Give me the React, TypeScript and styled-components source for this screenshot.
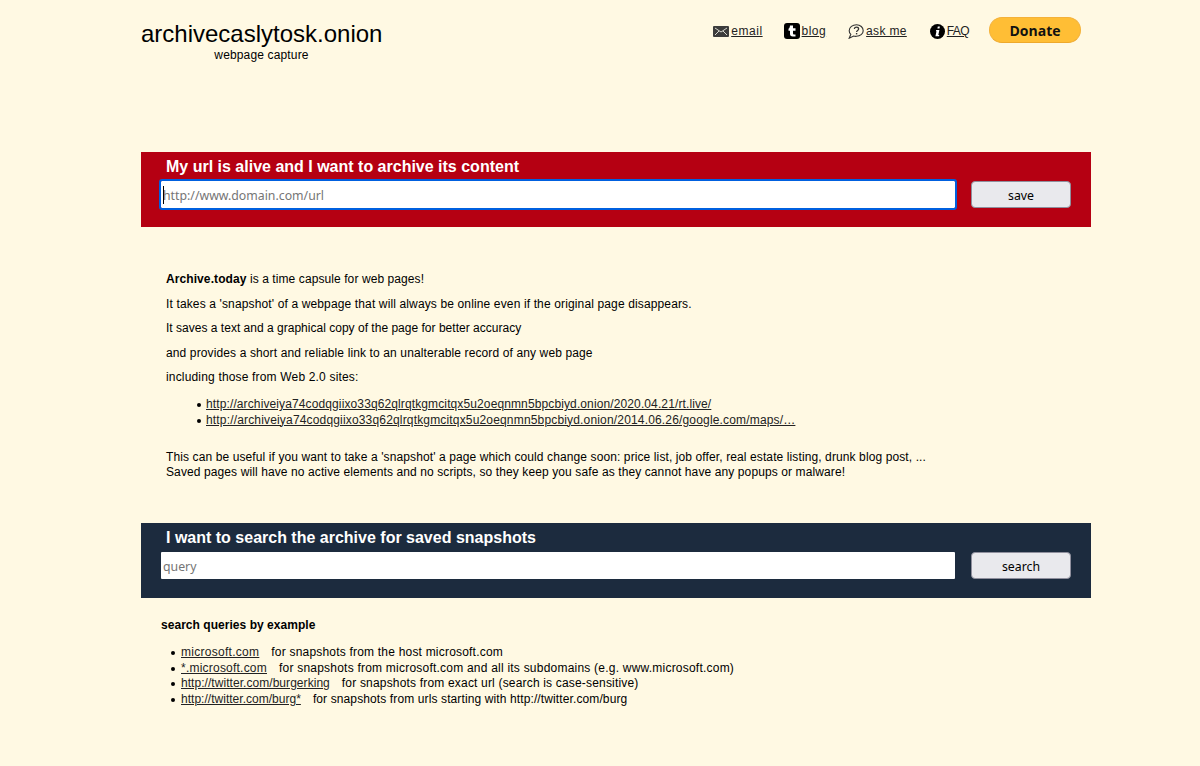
import React from "react";
import styled, { createGlobalStyle } from "styled-components";

const Global = createGlobalStyle`
  html, body { margin: 0; padding: 0; background: #fff9e3; }
  body { font-family: "Liberation Sans", Arial, sans-serif; font-size: 12px; color: #000; }
  a { color: #222; text-decoration: underline; }
`;

const Page = styled.div`
  width: 950px;
  height: 766px;
  margin-left: 141px;
  overflow: hidden;
`;

const Header = styled.header`
  height: 152px;
  display: flex;
  justify-content: space-between;
  align-items: flex-start;
`;

const Brand = styled.div`
  padding-top: 20px;
  width: 241px;
  text-align: center;
`;

const Title = styled.div`
  font-size: 24px;
  line-height: 27px;
  white-space: nowrap;
`;

const Tagline = styled.div`
  font-size: 12px;
  line-height: 14px;
  letter-spacing: 0.15px;
  padding-top: 1px;
`;

const Nav = styled.nav`
  display: flex;
  align-items: center;
  margin-top: 17px;
  margin-right: 10px;
  height: 28px;
`;

const NavItem = styled.a<{ $gap: number; $ls: number; $iconGap: number }>`
  display: flex;
  align-items: center;
  gap: ${(p) => p.$iconGap}px;
  margin-right: ${(p) => p.$gap}px;
  color: #222;
  font-size: 12px;
  line-height: 14px;
  letter-spacing: ${(p) => p.$ls}px;
`;

const NavIcon = styled.svg`
  display: block;
  flex: none;
`;

const Donate = styled.div`
  align-self: flex-start;
  box-sizing: border-box;
  width: 92px;
  height: 26px;
  border-radius: 13px;
  background: #ffbe35;
  border: 1px solid #f4b23a;
  border-bottom-color: #eea92c;
  display: flex;
  align-items: center;
  justify-content: center;
  font-family: "Open Sans", "Noto Sans", sans-serif;
  font-weight: 700;
  font-size: 14px;
  color: #111;
`;

const Bar = styled.section<{ $bg: string }>`
  background: ${(p) => p.$bg};
  height: 75px;
  padding: 5px 20px 0;
  box-sizing: border-box;
`;

const BarTitle = styled.div`
  color: #fff;
  font-size: 16px;
  font-weight: 700;
  line-height: 19px;
  padding-left: 5px;
`;

const BarRow = styled.div`
  display: flex;
  align-items: center;
  margin-top: 5px;
  height: 27px;
`;

const InputWrap = styled.div`
  position: relative;
  width: 794px;
  height: 27px;
  margin-right: 16px;
  flex: none;
`;

const UrlInput = styled.input<{ $focus?: boolean }>`
  display: block;
  box-sizing: border-box;
  width: 100%;
  height: 27px;
  background: #fff;
  border: 0;
  border-radius: 1px;
  outline: ${(p) => (p.$focus ? "2px solid #0060df" : "0")};
  padding: 2px 0 0 2px;
  font-family: "Noto Sans", sans-serif;
  font-size: 12.3px;
  color: #000;
  &::placeholder { color: #757575; opacity: 1; }
`;

const Caret = styled.span`
  position: absolute;
  left: 2px;
  top: 5px;
  width: 1px;
  height: 18px;
  background: #000;
`;

const Button = styled.button`
  box-sizing: border-box;
  width: 100px;
  height: 27px;
  background: #e9e9ed;
  border: 1px solid #8f8f9d;
  border-radius: 4px;
  font-family: "Noto Sans", sans-serif;
  font-size: 12.3px;
  color: #000;
  padding: 2px 0 0;
`;

const Intro = styled.div`
  height: 296px;
  padding: 45px 0 0 25px;
  box-sizing: border-box;
`;

const Para = styled.div<{ $ls: number }>`
  line-height: 14px;
  margin-bottom: 10.5px;
  white-space: nowrap;
  letter-spacing: ${(p) => p.$ls}px;
`;

const LinkList = styled.ul`
  margin: 13px 0 22px;
  padding: 0 0 0 40px;
  list-style: none;
  line-height: 15.5px;
`;

const Item = styled.li<{ $ls: number; $bullet: number }>`
  position: relative;
  white-space: nowrap;
  letter-spacing: ${(p) => p.$ls}px;
  &::before {
    content: "";
    position: absolute;
    left: ${(p) => p.$bullet}px;
    top: 6px;
    width: 4px;
    height: 4px;
    border-radius: 50%;
    background: #000;
  }
`;

const Note = styled.div<{ $ls: number }>`
  line-height: 15px;
  white-space: nowrap;
  letter-spacing: ${(p) => p.$ls}px;
`;

const Examples = styled.div`
  padding: 20px 0 0 20px;
`;

const ExamplesHead = styled.div`
  font-weight: 700;
  line-height: 14px;
  letter-spacing: 0.04px;
`;

const ExampleList = styled.ul`
  margin: 13px 0 0;
  padding: 0 0 0 20px;
  list-style: none;
  line-height: 15.5px;
`;

const ExampleLink = styled.a<{ $ls: number }>`
  margin-right: 12px;
  letter-spacing: ${(p) => p.$ls}px;
`;

const examples = [
  { link: "microsoft.com", text: "for snapshots from the host microsoft.com", linkLs: 0.28, ls: 0.2 },
  { link: "*.microsoft.com", text: "for snapshots from microsoft.com and all its subdomains (e.g. www.microsoft.com)", linkLs: 0.22, ls: 0.22 },
  { link: "http://twitter.com/burgerking", text: "for snapshots from exact url (search is case-sensitive)", linkLs: 0.05, ls: 0.18 },
  { link: "http://twitter.com/burg*", text: "for snapshots from urls starting with http://twitter.com/burg", linkLs: 0.02, ls: 0.115 },
];

export default function App() {
  return (
    <>
      <Global />
      <Page>
        <Header>
          <Brand>
            <Title>archivecaslytosk.onion</Title>
            <Tagline>webpage capture</Tagline>
          </Brand>
          <Nav>
            <NavItem href="#" $gap={21} $ls={0.55} $iconGap={2}>
              <NavIcon width="16" height="11" viewBox="0 0 16 11">
                <rect width="16" height="11" rx="1" fill="#3c3c3c" />
                <path d="M2 2 8 6 14 2M2 9 6 5M14 9 10 5" stroke="#d8d8d0" strokeWidth="1" fill="none" />
              </NavIcon>
              email
            </NavItem>
            <NavItem href="#" $gap={22} $ls={0.45} $iconGap={2}>
              <NavIcon width="16" height="16" viewBox="0 0 16 16">
                <rect width="16" height="16" rx="3" fill="#000" />
                <path d="M6 2.500h3v2.800h2.500v2.400H9v2.500c0 .9.500 1.200 1.200 1.200h1.300v2.200H8.800C6.900 13.600 6 12.600 6 10.800V7.700H4.500V5.800C5.500 5.400 5.900 4 6 2.500z" fill="#fff" />
              </NavIcon>
              blog
            </NavItem>
            <NavItem href="#" $gap={23} $ls={0.33} $iconGap={2}>
              <NavIcon width="16" height="15" viewBox="0 0 16 15">
                <path d="M8.500 .7C4.600 .7 1.200 3.200 1.200 6.700c0 1.500.6 2.700 1.600 3.600L1.200 14.200l4.400-2.200c.9.300 1.900.4 2.900.3 3.500-.2 6.700-2.400 6.700-5.600S12.400 .7 8.500 .7z" fill="none" stroke="#333" strokeWidth="1.100" />
                <path d="M6.300 5c.2-1.200 1.100-1.800 2.200-1.800 1.200 0 2.100.8 2.100 1.800 0 1.500-2 1.500-2 3" fill="none" stroke="#333" strokeWidth="1.300" />
                <rect x="7.900" y="9" width="1.400" height="1.400" fill="#333" />
              </NavIcon>
              ask me
            </NavItem>
            <NavItem href="#" $gap={20} $ls={-0.6} $iconGap={2}>
              <NavIcon width="15" height="15" viewBox="0 0 15 15">
                <circle cx="7.500" cy="7.500" r="7.500" fill="#000" />
                <path d="M7.800 2.500h2.100l-.4 2h-2.100zM6.200 6h3.200l-1.100 5h1l-.3 1.300H5.400l1.100-5.100h-.6z" fill="#fff" />
              </NavIcon>
              FAQ
            </NavItem>
            <Donate>Donate</Donate>
          </Nav>
        </Header>

        <Bar $bg="#b50012">
          <BarTitle>My url is alive and I want to archive its content</BarTitle>
          <BarRow>
            <InputWrap>
              <UrlInput $focus placeholder="http://www.domain.com/url" />
              <Caret />
            </InputWrap>
            <Button>save</Button>
          </BarRow>
        </Bar>

        <Intro>
          <Para $ls={0.087}><b>Archive.today</b> is a time capsule for web pages!</Para>
          <Para $ls={0.136}>It takes a 'snapshot' of a webpage that will always be online even if the original page disappears.</Para>
          <Para $ls={0.014}>It saves a text and a graphical copy of the page for better accuracy</Para>
          <Para $ls={0.123}>and provides a short and reliable link to an unalterable record of any web page</Para>
          <Para $ls={0.17}>including those from Web 2.0 sites:</Para>
          <LinkList>
            <Item $ls={0.116} $bullet={-9}><a href="#">http://archiveiya74codqgiixo33q62qlrqtkgmcitqx5u2oeqnmn5bpcbiyd.onion/2020.04.21/rt.live/</a></Item>
            <Item $ls={0.167} $bullet={-9}><a href="#">http://archiveiya74codqgiixo33q62qlrqtkgmcitqx5u2oeqnmn5bpcbiyd.onion/2014.06.26/google.com/maps/…</a></Item>
          </LinkList>
          <Note $ls={0.107}>This can be useful if you want to take a 'snapshot' a page which could change soon: price list, job offer, real estate listing, drunk blog post, ...</Note>
          <Note $ls={0.105}>Saved pages will have no active elements and no scripts, so they keep you safe as they cannot have any popups or malware!</Note>
        </Intro>

        <Bar $bg="#1c2b3e">
          <BarTitle>I want to search the archive for saved snapshots</BarTitle>
          <BarRow>
            <InputWrap>
              <UrlInput placeholder="query" />
            </InputWrap>
            <Button>search</Button>
          </BarRow>
        </Bar>

        <Examples>
          <ExamplesHead>search queries by example</ExamplesHead>
          <ExampleList>
            {examples.map((e) => (
              <Item key={e.link} $ls={e.ls} $bullet={-10}>
                <ExampleLink href="#" $ls={e.linkLs}>{e.link}</ExampleLink>
                {e.text}
              </Item>
            ))}
          </ExampleList>
        </Examples>
      </Page>
    </>
  );
}
